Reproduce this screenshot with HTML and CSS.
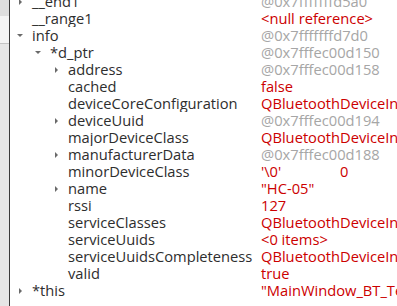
FILE: index.html
```html
<!DOCTYPE html>
<html>
<head>
<meta charset="utf-8">
<link rel="stylesheet" href="styles.css">
</head>
<body>
<div class="frame">
  <div class="strip">
    <div class="strip-top"></div>
    <div class="strip-light"></div>
    <div class="strip-rest"></div>
  </div>
  <div class="view">
    <div class="tree">
      <div class="row"><div class="name d0"><span class="arrow right"></span>__end1</div><div class="val addr">@0x7fffffffd5a0</div></div>
      <div class="row"><div class="name d0"><span class="arrow"></span>__range1</div><div class="val red">&lt;null reference&gt;</div></div>
      <div class="row"><div class="name d0"><span class="arrow down"></span>info</div><div class="val addr">@0x7fffffffd7d0</div></div>
      <div class="row"><div class="name d1"><span class="arrow down"></span>*d_ptr</div><div class="val addr">@0x7fffec00d150</div></div>
      <div class="row"><div class="name d2"><span class="arrow right"></span>address</div><div class="val addr">@0x7fffec00d158</div></div>
      <div class="row"><div class="name d2"><span class="arrow"></span>cached</div><div class="val red">false</div></div>
      <div class="row"><div class="name d2"><span class="arrow"></span>deviceCoreConfiguration</div><div class="val red">QBluetoothDeviceInfo::CoreConfigurations</div></div>
      <div class="row"><div class="name d2"><span class="arrow right"></span>deviceUuid</div><div class="val addr">@0x7fffec00d194</div></div>
      <div class="row"><div class="name d2"><span class="arrow"></span>majorDeviceClass</div><div class="val red">QBluetoothDeviceInfo::MajorDeviceClass</div></div>
      <div class="row"><div class="name d2"><span class="arrow right"></span>manufacturerData</div><div class="val addr">@0x7fffec00d188</div></div>
      <div class="row"><div class="name d2"><span class="arrow"></span>minorDeviceClass</div><div class="val red"><span class="chr">'\0'</span>0</div></div>
      <div class="row"><div class="name d2"><span class="arrow right"></span>name</div><div class="val red">"HC-05"</div></div>
      <div class="row"><div class="name d2"><span class="arrow"></span>rssi</div><div class="val red">127</div></div>
      <div class="row"><div class="name d2"><span class="arrow"></span>serviceClasses</div><div class="val red">QBluetoothDeviceInfo::ServiceClasses</div></div>
      <div class="row"><div class="name d2"><span class="arrow"></span>serviceUuids</div><div class="val red">&lt;0 items&gt;</div></div>
      <div class="row"><div class="name d2"><span class="arrow"></span>serviceUuidsCompleteness</div><div class="val red">QBluetoothDeviceInfo::DataIncomplete</div></div>
      <div class="row"><div class="name d2"><span class="arrow"></span>valid</div><div class="val red">true</div></div>
      <div class="row"><div class="name d0"><span class="arrow right"></span>*this</div><div class="val red">"MainWindow_BT_Test"</div></div>
    </div>
  </div>
</div>
</body>
</html>
```
FILE: styles.css
```css
html, body {
  margin: 0;
  padding: 0;
  background: #ffffff;
}
.frame {
  display: flex;
  width: 397px;
  height: 306px;
  overflow: hidden;
}
.strip {
  width: 9px;
  flex: none;
  display: flex;
  flex-direction: column;
  border-right: 1px solid #3a3a3a;
}
.strip-top {
  height: 16px;
  background: #dedede;
}
.strip-light {
  height: 27px;
  background: #f4f4f4;
  border-bottom: 1px solid #c4c4c4;
}
.strip-rest {
  flex: 1;
  background: #e6e6e6;
}
.view {
  flex: 1;
  overflow: hidden;
  font-family: "Open Sans", "DejaVu Sans", sans-serif;
  font-size: 14.7px;
}
.tree {
  margin-top: -7px;
}
.row {
  display: flex;
  height: 17px;
  line-height: 17px;
  white-space: nowrap;
}
.name {
  width: 250px;
  box-sizing: border-box;
  flex: none;
  display: flex;
  align-items: center;
  color: #2e2e2e;
  overflow: hidden;
}
.d0 { padding-left: 0; }
.d1 { padding-left: 18px; }
.d2 { padding-left: 36px; }
.arrow {
  width: 22px;
  height: 17px;
  flex: none;
  display: flex;
  align-items: center;
  padding-left: 7px;
  box-sizing: border-box;
}
.arrow.right::before {
  content: "";
  border-left: 3px solid #6a6a6a;
  border-top: 3px solid transparent;
  border-bottom: 3px solid transparent;
  margin-left: 2px;
}
.arrow.down::before {
  content: "";
  border-top: 3px solid #6a6a6a;
  border-left: 3px solid transparent;
  border-right: 3px solid transparent;
  margin-left: 0;
}
.val {
  flex: none;
  padding-left: 1px;
}
.addr { color: #a6a6a6; }
.red { color: #cc0000; }
.chr {
  display: inline-block;
  width: 79px;
}
```
